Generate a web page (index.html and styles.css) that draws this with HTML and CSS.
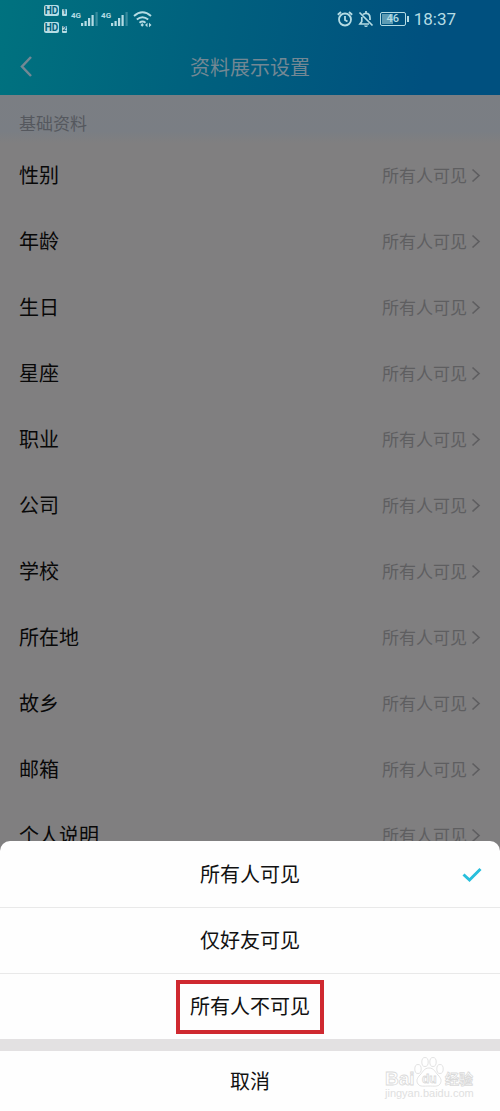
FILE: index.html
```html
<!DOCTYPE html>
<html lang="zh-CN">
<head>
<meta charset="utf-8">
<meta name="viewport" content="width=device-width, initial-scale=1">
<title>资料展示设置</title>
<link rel="stylesheet" href="styles.css">
</head>
<body>
<svg class="defs" aria-hidden="true">
  <symbol id="chevron" viewBox="0 0 10 16"><path d="M1.500 1.500 8 7.500l-6.500 6" fill="none" stroke="currentColor" stroke-width="1.700"/></symbol>
  <symbol id="bars" viewBox="0 0 18 16">
    <path d="M0 15v-3h2.200v3zM3.500 15v-5h2.200v5zM7 15V7h2.200v8zM10.500 15V4h2.200v11z" fill="currentColor"/>
    <path d="M14.500 15V1h2.200v14z" fill="currentColor" opacity=".3"/>
  </symbol>
</svg>
<div class="screen">
  <header class="top">
    <div class="status">
      <div class="status-left">
        <div class="hd-stack">
          <div class="hd"><span class="hd-badge">HD</span><span class="hd-slot">1</span></div>
          <div class="hd"><span class="hd-badge">HD</span><span class="hd-slot">2</span></div>
        </div>
        <div class="signal"><span class="net">4G</span><svg class="bars" aria-hidden="true"><use href="#bars"/></svg></div>
        <div class="signal"><span class="net">4G</span><svg class="bars" aria-hidden="true"><use href="#bars"/></svg></div>
        <svg class="wifi" viewBox="0 0 20 18" aria-hidden="true">
          <g fill="none" stroke="currentColor" stroke-width="1.900">
            <path d="M1 6Q9.500-1.500 18 6M3.800 9.500q5.700-4.700 11.400 0M6.500 12.700q3-2.400 6 0"/>
          </g>
          <path d="M7.500 15 9.200 13l1.700 2-1.700 1.800zM12 15l2.500-2.200v4.400zM18.500 15 16 12.800v4.400z" fill="currentColor"/>
        </svg>
      </div>
      <div class="status-right">
        <svg class="alarm" viewBox="0 0 16 18" aria-hidden="true">
          <g fill="none" stroke="currentColor" stroke-width="1.800"><circle cx="8" cy="9.500" r="6"/><path d="M8 6v4l2.500 1.500M.8 4.800 4 2M15.200 4.800 12 2"/></g>
        </svg>
        <svg class="bell" viewBox="0 0 16 18" aria-hidden="true">
          <g fill="none" stroke="currentColor" stroke-width="1.700"><path d="M1.500 2.500 14.500 15.500M5 4.500Q6 3.300 8 3.300q4 0 4 4.700v2M3.800 7v4.500L2 14h9M8 1v2.300"/></g>
          <path d="M6 15.500h4Q9.500 17 8 17t-2-1.500z" fill="currentColor"/>
        </svg>
        <div class="battery"><span class="charge">46</span></div>
        <span class="time">18:37</span>
      </div>
    </div>
    <div class="nav">
      <button class="back" type="button" aria-label="返回"><svg viewBox="0 0 14 22" aria-hidden="true"><path d="M12 1 3 10.500 12 20" fill="none" stroke="currentColor" stroke-width="2.500"/></svg></button>
      <h1 class="title">资料展示设置</h1>
    </div>
  </header>
  <main>
    <h2 class="section">基础资料</h2>
    <div class="list">
      <button class="row" type="button"><span>性别</span><span class="value">所有人可见<svg class="chev"><use href="#chevron"/></svg></span></button>
      <button class="row" type="button"><span>年龄</span><span class="value">所有人可见<svg class="chev"><use href="#chevron"/></svg></span></button>
      <button class="row" type="button"><span>生日</span><span class="value">所有人可见<svg class="chev"><use href="#chevron"/></svg></span></button>
      <button class="row" type="button"><span>星座</span><span class="value">所有人可见<svg class="chev"><use href="#chevron"/></svg></span></button>
      <button class="row" type="button"><span>职业</span><span class="value">所有人可见<svg class="chev"><use href="#chevron"/></svg></span></button>
      <button class="row" type="button"><span>公司</span><span class="value">所有人可见<svg class="chev"><use href="#chevron"/></svg></span></button>
      <button class="row" type="button"><span>学校</span><span class="value">所有人可见<svg class="chev"><use href="#chevron"/></svg></span></button>
      <button class="row" type="button"><span>所在地</span><span class="value">所有人可见<svg class="chev"><use href="#chevron"/></svg></span></button>
      <button class="row" type="button"><span>故乡</span><span class="value">所有人可见<svg class="chev"><use href="#chevron"/></svg></span></button>
      <button class="row" type="button"><span>邮箱</span><span class="value">所有人可见<svg class="chev"><use href="#chevron"/></svg></span></button>
      <button class="row" type="button"><span>个人说明</span><span class="value">所有人可见<svg class="chev"><use href="#chevron"/></svg></span></button>
    </div>
  </main>
  <div class="sheet" role="dialog" aria-label="可见范围">
    <button class="option" type="button">所有人可见
      <svg class="check" viewBox="0 0 20 16" aria-hidden="true"><path d="M1.500 7.500 7.500 13 18.500 2" fill="none" stroke="currentColor" stroke-width="3"/></svg>
    </button>
    <button class="option" type="button">仅好友可见</button>
    <button class="option" type="button"><span class="marked">所有人不可见</span></button>
    <button class="cancel" type="button">取消</button>
    <svg class="watermark" viewBox="0 0 92 48" aria-label="Baidu经验 jingyan.baidu.com">
      <g fill="#fff" stroke="#dadada" stroke-width=".8">
        <text x="1" y="30" class="brand">Bai</text>
        <text x="61" y="29" class="brand-cn">经验</text>
        <ellipse cx="34" cy="14" rx="3.200" ry="4.500"/><ellipse cx="41" cy="7" rx="3.200" ry="4.500"/>
        <ellipse cx="49" cy="7" rx="3.200" ry="4.500"/><ellipse cx="56" cy="14" rx="3.200" ry="4.500"/>
        <path d="M45 13c-5 0-6 4-9 7s-4 6-2 9 6 2 11 2 9 1 11-2 1-6-2-9-4-7-9-7z"/>
        <text x="38" y="28" class="brand-du">du</text>
      </g>
      <text x="1" y="42" class="site">jingyan.baidu.com</text>
    </svg>
  </div>
</div>
</body>
</html>
```

FILE: styles.css
```css
* { box-sizing: border-box; }

body {
  margin: 0;
  background: #807f80;
  font-family: Roboto, "Noto Sans CJK SC", sans-serif;
}

button {
  margin: 0;
  padding: 0;
  border: 0;
  background: none;
  color: inherit;
  font: inherit;
}

svg { display: block; }
.defs { position: absolute; width: 0; height: 0; }

.screen {
  position: relative;
  height: 100vh;
  overflow: hidden;
}

.top {
  background: linear-gradient(100deg, #00727f 0%, #00607e 42%, #00507f 85%);
}

.status {
  display: flex;
  justify-content: space-between;
  height: 38px;
  padding: 0 44px;
  color: #b5dce4;
}

.status-left,
.status-right { display: flex; align-items: center; }

.hd-stack { display: grid; gap: 6px; }
.hd { display: flex; align-items: flex-end; gap: 3px; font-weight: 700; }

.hd-badge,
.hd-slot {
  border-radius: 2px;
  background: #b5dce4;
  color: #00607a;
  text-align: center;
}

.hd-badge { width: 15px; font-size: 10px; line-height: 11px; }
.hd-slot { width: 5px; border-radius: 1px; font-size: 7px; line-height: 7px; }

.signal { display: flex; align-items: flex-start; margin-left: 4px; }
.net { font-size: 8px; font-weight: 700; line-height: 9px; }
.bars { width: 18px; height: 16px; }
.signal + .signal { margin-left: 2px; }
.wifi { width: 20px; height: 18px; margin-left: 4px; }
.alarm { width: 16px; height: 18px; }
.bell { width: 16px; height: 18px; margin-left: 5px; }

.battery {
  position: relative;
  width: 26px;
  height: 14px;
  margin: 0 4px 0 6px;
  border: 1px solid currentColor;
  border-radius: 2px;
  background: linear-gradient(90deg, #5d9bb3 50%, transparent 50%) content-box;
  padding: 1px;
}

.battery::after {
  content: "";
  position: absolute;
  top: 3px;
  right: -4px;
  width: 2px;
  height: 6px;
  background: currentColor;
}

.charge { display: block; font-size: 11px; font-weight: 500; line-height: 10px; text-align: center; }
.time { margin-left: 4px; font-size: 17px; line-height: 20px; }

.nav {
  display: grid;
  grid-template-columns: 56px 1fr 56px;
  align-items: center;
  height: 57px;
  color: #738894;
}

.back { height: 44px; padding-left: 19px; }
.back svg { width: 14px; height: 22px; }

.title {
  margin: 0;
  padding-top: 2px;
  font-size: 20px;
  font-weight: 400;
  line-height: 28px;
  text-align: center;
}

.section {
  height: 48px;
  margin: 0;
  padding: 17px 19px 0;
  background: linear-gradient(#7b7e83, #7a7e84 75%, #807f80);
  color: #55585e;
  font-size: 17px;
  font-weight: 400;
  line-height: 24px;
}

.row {
  display: flex;
  align-items: center;
  justify-content: space-between;
  width: 100%;
  height: 66px;
  padding: 0 19px;
  color: #080808;
  font-size: 20px;
  line-height: 28px;
}

.value {
  display: flex;
  align-items: center;
  gap: 4px;
  color: #5e5e60;
  font-size: 17px;
}

.chev { width: 10px; height: 16px; }

.sheet {
  position: absolute;
  right: 0;
  bottom: 0;
  left: 0;
  overflow: hidden;
  border-radius: 10px 10px 0 0;
  background: #fefefe;
  color: #111;
  font-size: 20px;
  line-height: 28px;
}

.option {
  position: relative;
  display: flex;
  align-items: center;
  justify-content: center;
  width: 100%;
  height: 66px;
  padding-top: 2px;
}

.option + .option { padding-top: 0; border-top: 1px solid #e9e9e9; }

.check {
  position: absolute;
  right: 18px;
  width: 20px;
  height: 16px;
  color: #28bfdc;
}

.marked {
  padding: 9px 10px;
  border: 4px solid #cf2930;
}

.cancel {
  width: 100%;
  height: 72px;
  padding-top: 2px;
  border-top: 12px solid #e3e1e2;
}

.watermark {
  position: absolute;
  right: 24px;
  bottom: 8px;
  width: 92px;
  height: 48px;
}

.brand { font: bold 19px "Liberation Sans", sans-serif; }
.brand-cn { font: bold 14px "Noto Sans CJK SC", sans-serif; }
.brand-du { font: bold 12px "Liberation Sans", sans-serif; }
.site { fill: #e0e0e0; font: 11px "Liberation Sans", sans-serif; }
```
